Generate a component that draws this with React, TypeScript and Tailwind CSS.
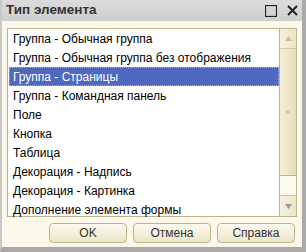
const items = [
  "Группа - Обычная группа",
  "Группа - Обычная группа без отображения",
  "Группа - Страницы",
  "Группа - Командная панель",
  "Поле",
  "Кнопка",
  "Таблица",
  "Декорация - Надпись",
  "Декорация - Картинка",
  "Дополнение элемента формы",
];

function Btn({ label }: { label: string }) {
  return (
    <button className="h-[20px] w-[78px] rounded-[4px] border border-[#bfb48c] bg-gradient-to-b from-[#fdfbf0] to-[#ece5c8] text-[12px] text-[#333]">
      {label}
    </button>
  );
}

export default function App() {
  return (
    <div
      className="flex h-[252px] w-[306px] flex-col border-b-[5px] border-l-[2px] border-r-[4px] border-b-[#a9a9a9] border-l-[#c8c8c8] border-r-[#a9a9a9] bg-[#fbf8e9]"
      style={{ fontFamily: '"Liberation Sans", Arial, sans-serif' }}
    >
      <div className="flex h-[21px] shrink-0 items-center bg-gradient-to-b from-[#dcdcdc] to-[#cfcfcf] pl-[4px] pr-[4px]">
        <span className="text-[13.5px] font-bold text-[#333]">Тип элемента</span>
        <div className="ml-auto flex items-center gap-[10px]">
          <svg width="12" height="12" viewBox="0 0 12 12">
            <rect x="0.5" y="0.5" width="11" height="11" fill="none" stroke="#222" strokeWidth="1.2" />
          </svg>
          <svg width="11" height="11" viewBox="0 0 11 11">
            <path d="M1 1 L10 10 M10 1 L1 10" stroke="#222" strokeWidth="2" />
          </svg>
        </div>
      </div>
      <div className="flex flex-1 flex-col px-[5px] pt-[7px]">
        <div className="flex h-[189px] border border-[#bcb590] bg-white">
          <div className="flex flex-1 flex-col">
            {items.map((t, i) => (
              <div
                key={t}
                className={
                  i === 2
                    ? "ml-[1px] flex h-[19px] items-center border border-dotted border-[#c9b450] bg-[#5068c0] pl-[3px] text-[12px] whitespace-nowrap text-white"
                    : "ml-[1px] flex h-[19px] items-center border border-transparent pl-[3px] text-[12px] whitespace-nowrap text-black"
                }
              >
                {t}
              </div>
            ))}
          </div>
          <div className="flex w-[17px] flex-col border-l border-[#bcb590] bg-[#fbf8e9]">
            <div className="flex h-[20px] items-center justify-center border-b border-[#cfc7a3] bg-gradient-to-r from-[#f5f1dc] to-[#ede6c6]">
              <svg width="7" height="5" viewBox="0 0 7 5">
                <path d="M3.5 0 L7 5 L0 5 Z" fill="#c6c1ad" />
              </svg>
            </div>
            <div className="flex h-[127px] items-center justify-center border-b border-[#bcb590] bg-gradient-to-r from-[#f4efd6] via-[#efe8c8] to-[#e6ddb6]">
              <div className="h-[4px] w-[4px] rounded-full bg-[#cfcab8]" />
            </div>
            <div className="flex-1 bg-[#fcfaef]" />
            <div className="flex h-[21px] items-center justify-center border-t border-[#cfc7a3] bg-gradient-to-r from-[#f5f1dc] to-[#ede6c6]">
              <svg width="7" height="5" viewBox="0 0 7 5">
                <path d="M0 0 L7 0 L3.5 5 Z" fill="#9c9a92" />
              </svg>
            </div>
          </div>
        </div>
        <div className="mt-[6px] flex justify-end gap-[6px] pr-[2px]">
          <Btn label="OK" />
          <Btn label="Отмена" />
          <Btn label="Справка" />
        </div>
      </div>
    </div>
  );
}
